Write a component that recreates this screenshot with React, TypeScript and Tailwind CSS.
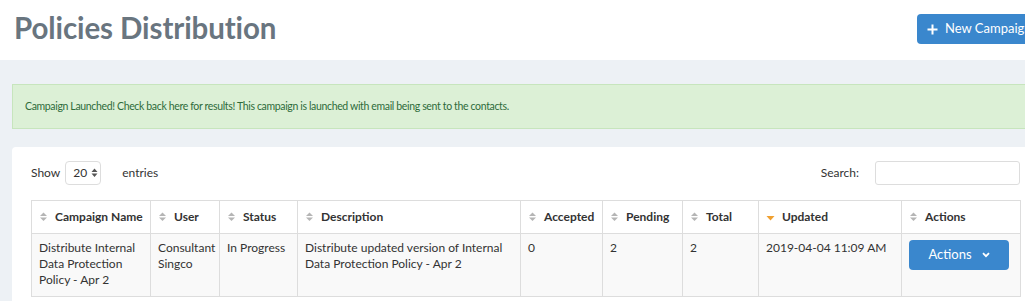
const cols = [
  { label: "Campaign Name", w: 119 },
  { label: "User", w: 69 },
  { label: "Status", w: 78 },
  { label: "Description", w: 223 },
  { label: "Accepted", w: 82 },
  { label: "Pending", w: 80 },
  { label: "Total", w: 76 },
  { label: "Updated", w: 143, active: true },
  { label: "Actions", w: 119 },
];

const row = [
  "Distribute Internal Data Protection Policy - Apr 2",
  "Consultant Singco",
  "In Progress",
  "Distribute updated version of Internal Data Protection Policy - Apr 2",
  "0",
  "2",
  "2",
  "2019-04-04 11:09 AM",
];

function SortIcon({ active }: { active?: boolean }) {
  if (active) {
    return (
      <svg width="9" height="10" viewBox="0 0 9 10" className="shrink-0">
        <path d="M0.5 4 L8.5 4 L4.5 8.5 Z" fill="#f0a030" />
      </svg>
    );
  }
  return (
    <svg width="9" height="10" viewBox="0 0 9 10" className="shrink-0">
      <path d="M1 4 L8 4 L4.5 0.5 Z" fill="#b5b5b5" />
      <path d="M1 5.5 L8 5.5 L4.5 9 Z" fill="#b5b5b5" />
    </svg>
  );
}

export default function App() {
  return (
    <div className="w-[1025px] h-[301px] overflow-hidden bg-[#edf1f5] font-['Lato',sans-serif] text-[#333]">
      <header className="h-[60px] bg-white flex items-center pl-[14px]">
        <h1 className="text-[29.5px] font-bold text-[#69757f] tracking-[-0.1px] -mt-[3px]">Policies Distribution</h1>
        <button className="ml-auto mr-[-20px] w-[128px] shrink-0 flex items-center gap-[7px] h-[30px] rounded-[4px] bg-[#3a87cd] text-white text-[13px] pl-[10px] -mt-[2px] whitespace-nowrap">
          <svg width="11" height="11" viewBox="0 0 11 11">
            <path d="M5.5 0.5 V10.5 M0.5 5.5 H10.5" stroke="white" strokeWidth="2" />
          </svg>
          New Campaign
        </button>
      </header>

      <div className="pl-[12px] pt-[24px]">
        <div className="h-[45px] bg-[#dcf0d6] border border-[#c7e5bd] border-r-0 flex items-center pl-[12px] text-[10.5px] tracking-[-0.35px] text-[#2e6b3a]">
          Campaign Launched! Check back here for results! This campaign is launched with email being sent to the contacts.
        </div>

        <div className="mt-[18px] bg-white rounded-tl-[4px] pl-[19px] pt-[14px] h-[200px]">
          <div className="flex items-center h-[24px] w-[989px] text-[12px]">
            <span>Show</span>
            <div className="ml-[5px] flex items-center gap-[4px] h-[24px] w-[36px] border border-[#ddd] rounded-[4px] pl-[7px]">
              <span>20</span>
              <svg width="7" height="10" viewBox="0 0 7 10">
                <path d="M0.5 4 L6.5 4 L3.5 0.5 Z M0.5 5.5 L6.5 5.5 L3.5 9 Z" fill="#555" />
              </svg>
            </div>
            <span className="ml-[21px]">entries</span>
            <span className="ml-auto mr-[16px]">Search:</span>
            <input className="w-[145px] h-[24px] border border-[#ddd] rounded-[3px]" />
          </div>

          <table className="mt-[15px] w-[989px] border-collapse table-fixed text-[12px]">
            <colgroup>
              {cols.map((c) => (
                <col key={c.label} style={{ width: c.w }} />
              ))}
            </colgroup>
            <thead>
              <tr className="h-[33px]">
                {cols.map((c) => (
                  <th key={c.label} className="border border-[#ddd] text-left font-bold px-[7px] align-middle">
                    <div className="flex items-center gap-[7px]">
                      <SortIcon active={c.active} />
                      <span className="whitespace-nowrap">{c.label}</span>
                    </div>
                  </th>
                ))}
              </tr>
            </thead>
            <tbody>
              <tr className="h-[63px] bg-[#f9f9f9]">
                {row.map((v, i) => (
                  <td key={i} className="border border-[#ddd] align-top px-[7px] pt-[6px] leading-[16px]">
                    {v}
                  </td>
                ))}
                <td className="border border-[#ddd] align-top px-[7px] pt-[6px]">
                  <button className="w-[100px] h-[30px] rounded-[4px] bg-[#3a87cd] text-white text-[13px] flex items-center justify-center gap-[10px]">
                    Actions
                    <svg width="8" height="6" viewBox="0 0 8 6">
                      <path d="M1 1.2 L4 4.2 L7 1.2" stroke="white" strokeWidth="1.8" fill="none" />
                    </svg>
                  </button>
                </td>
              </tr>
            </tbody>
          </table>
        </div>
      </div>
    </div>
  );
}
